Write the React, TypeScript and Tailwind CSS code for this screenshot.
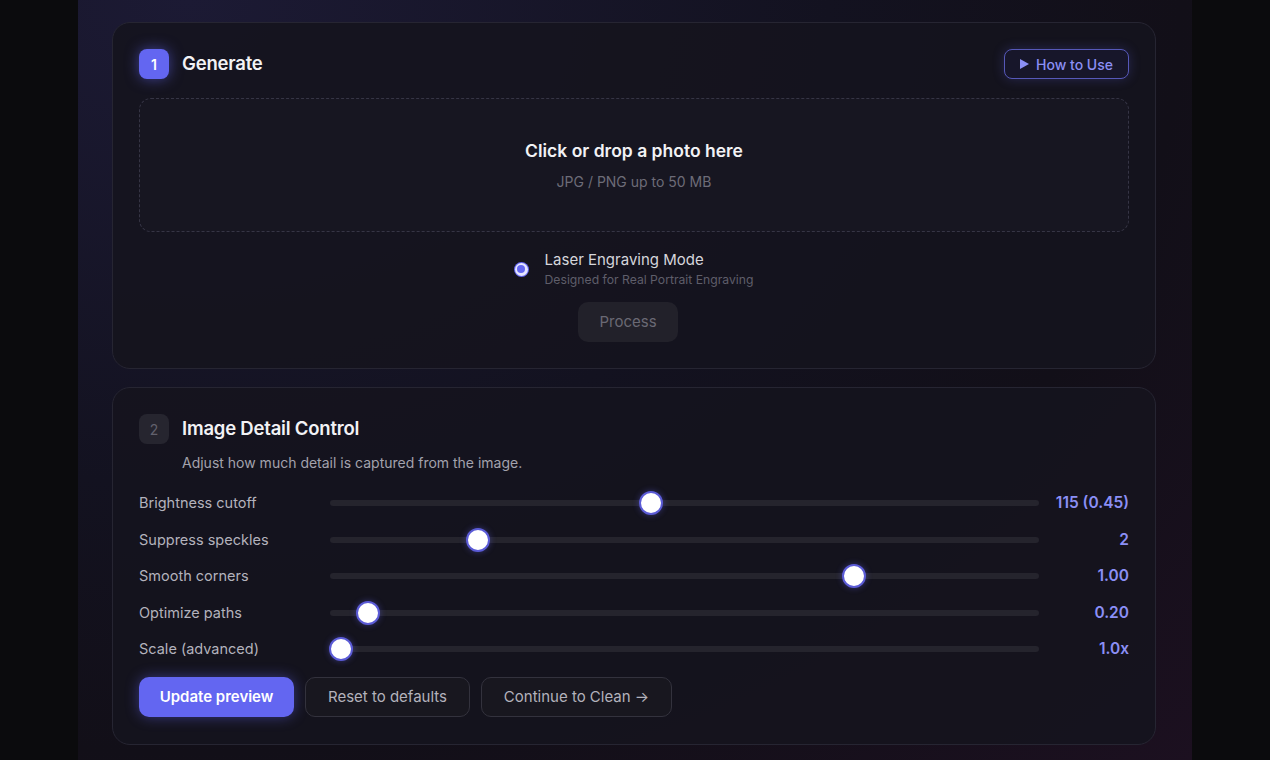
import type { JSX } from 'react';

interface ISliderRow {
  label: string;
  value: string;
  pos: number;
}

const ROWS: ISliderRow[] = [
  { label: 'Brightness cutoff', value: '115 (0.45)', pos: 0.451 },
  { label: 'Suppress speckles', value: '2', pos: 0.199 },
  { label: 'Smooth corners', value: '1.00', pos: 0.746 },
  { label: 'Optimize paths', value: '0.20', pos: 0.039 },
  { label: 'Scale (advanced)', value: '1.0x', pos: 0 },
];

function Slider({ pos }: { pos: number }): JSX.Element {
  return (
    <div className="relative h-6 flex-1">
      <div className="absolute left-0 right-0 top-1/2 h-[6px] -translate-y-1/2 rounded-full bg-[#25242d]" />
      <div
        className="absolute top-1/2 h-6 w-6 -translate-y-1/2 rounded-full border-2 border-[#5b5bd6] bg-white shadow-[0_0_6px_rgba(99,102,241,0.4)]"
        style={{ left: `calc(${pos} * (100% - 22px) - 1px)` }}
      />
    </div>
  );
}

export default function App(): JSX.Element {
  return (
    <div className="flex min-h-[760px] w-full justify-center bg-[#0b0b0d] font-['Inter',sans-serif]">
      <div className="w-[1114px] bg-[radial-gradient(ellipse_at_10%_0%,#1c1a34_0%,#131220_45%,#120f18_70%,#1c1020_100%)] pl-[34px] pr-[36px] pt-[22px] pb-[16px]">
        {/* Card 1 */}
        <section className="rounded-[18px] border border-[#262532] bg-[#15141e]/90 px-[26px] pt-[26px] pb-[26px]">
          <div className="flex items-center justify-between">
            <div className="flex items-center gap-[13px]">
              <div className="flex h-[30px] w-[30px] items-center justify-center rounded-[8px] bg-[#6366f1] text-[14px] font-semibold text-white shadow-[0_0_14px_rgba(99,102,241,0.55)]">
                1
              </div>
              <h2 className="text-[18.5px] font-semibold tracking-[-0.2px] text-[#f2f2f5]">Generate</h2>
            </div>
            <button className="flex h-[30px] items-center gap-[7px] rounded-[8px] border border-[#5658b8] bg-[#17162a] px-[15px] text-[14px] font-medium text-[#8b8ff5] shadow-[0_0_12px_rgba(99,102,241,0.25)]">
              <svg width="9" height="10" viewBox="0 0 9 10" fill="currentColor">
                <path d="M0 0 L9 5 L0 10 Z" />
              </svg>
              How to Use
            </button>
          </div>

          <div className="mt-[19px] flex h-[134px] flex-col items-center justify-center rounded-[12px] border border-dashed border-[#363545] bg-[#171621]">
            <div className="text-[17.5px] font-semibold text-[#f2f2f5]">Click or drop a photo here</div>
            <div className="mt-[6px] text-[14px] text-[#6d6c78]">JPG / PNG up to 50 MB</div>
          </div>

          <div className="mt-[18px] flex justify-center">
            <div className="flex items-center gap-[17px]">
              <div className="flex h-[13px] w-[13px] items-center justify-center rounded-full bg-[#e5e5ff] ring-1 ring-[#6366f1]">
                <div className="h-[8px] w-[8px] rounded-full bg-[#6366f1]" />
              </div>
              <div className="flex flex-col">
                <span className="text-[15px] leading-[20px] text-[#d6d6dc]">Laser Engraving Mode</span>
                <span className="mt-[2px] text-[12.2px] leading-[16px] text-[#5f5e6a]">Designed for Real Portrait Engraving</span>
              </div>
            </div>
          </div>

          <div className="mt-[14px] flex justify-center">
            <button className="mr-[12px] h-[40px] w-[100px] rounded-[10px] bg-[#22212a] text-[15px] text-[#6a6974]">Process</button>
          </div>
        </section>

        {/* Card 2 */}
        <section className="mt-[18px] rounded-[18px] border border-[#262532] bg-[#15141e]/90 px-[26px] pt-[26px] pb-[27px]">
          <div className="flex items-center gap-[13px]">
            <div className="flex h-[30px] w-[30px] items-center justify-center rounded-[8px] bg-[#26252f] text-[14px] text-[#62616d]">
              2
            </div>
            <h2 className="text-[18.5px] font-semibold tracking-[-0.2px] text-[#f2f2f5]">Image Detail Control</h2>
          </div>
          <p className="mt-[8px] pl-[43px] text-[14px] text-[#a3a2ad]">Adjust how much detail is captured from the image.</p>

          <div className="mt-[18px] flex flex-col gap-[12.5px]">
            {ROWS.map((r) => (
              <div key={r.label} className="flex h-[24px] items-center">
                <div className="w-[191px] text-[14.5px] text-[#b3b2bc]">{r.label}</div>
                <Slider pos={r.pos} />
                <div className="w-[90px] text-right text-[15.5px] font-semibold text-[#8b8ff5]">{r.value}</div>
              </div>
            ))}
          </div>

          <div className="mt-[16px] flex gap-[11px]">
            <button className="h-[40px] w-[155px] rounded-[10px] bg-[#6366f1] text-[15px] font-semibold text-white shadow-[0_0_14px_rgba(99,102,241,0.45)]">
              Update preview
            </button>
            <button className="h-[40px] w-[165px] rounded-[10px] border border-[#33323d] bg-[#18171f] text-[15px] text-[#b3b2bc]">
              Reset to defaults
            </button>
            <button className="h-[40px] w-[191px] rounded-[10px] border border-[#33323d] bg-[#18171f] text-[15px] text-[#b3b2bc]">
              Continue to Clean →
            </button>
          </div>
        </section>
      </div>
    </div>
  );
}
